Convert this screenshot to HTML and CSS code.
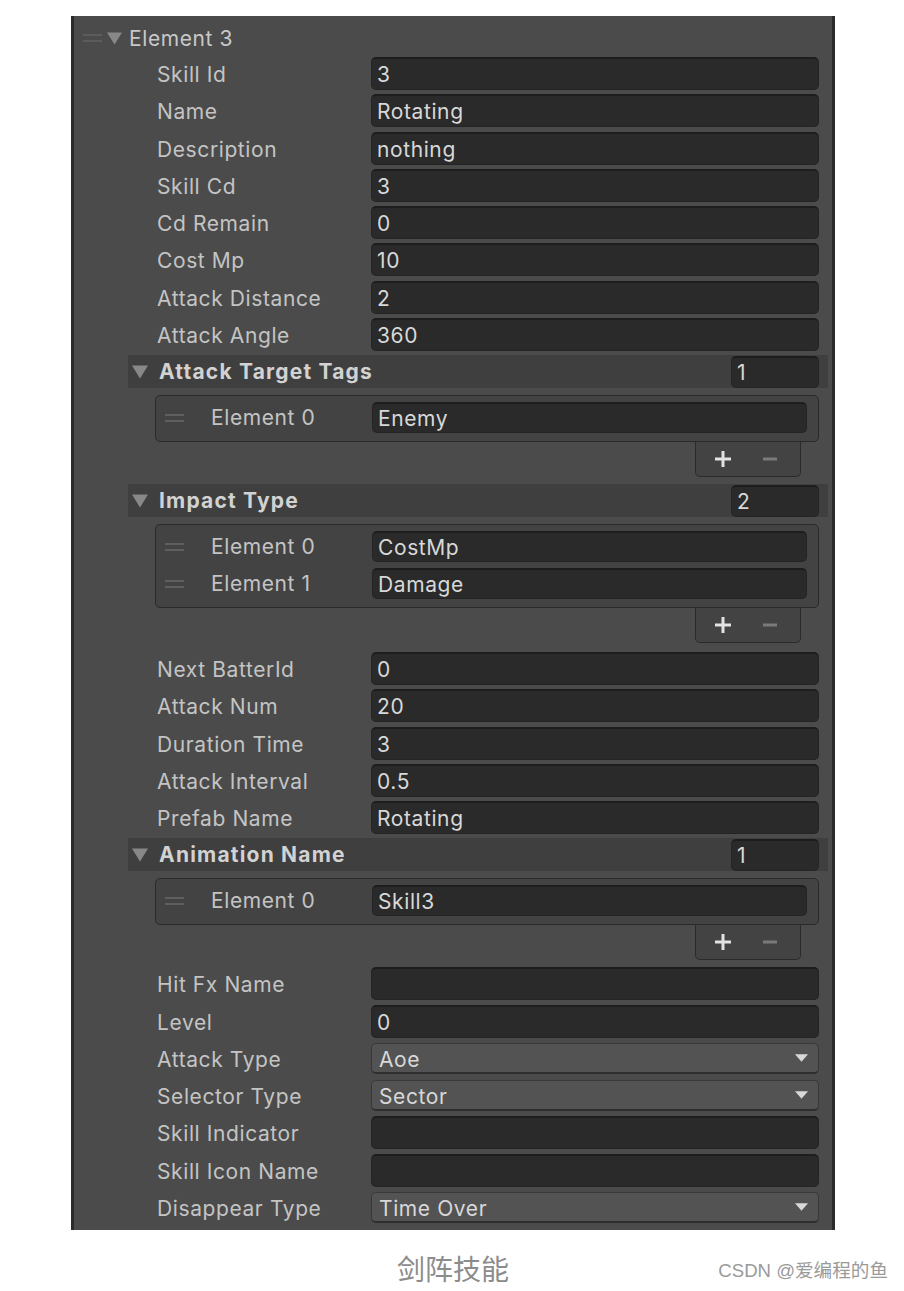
FILE: index.html
```html
<!DOCTYPE html>
<html>
<head>
<meta charset="utf-8">
<link rel="stylesheet" href="styles.css">
</head>
<body>
<div class="panel">
  <div class="elem-head">
    <span class="handle handle-top"></span>
    <svg class="tri tri-top" viewBox="0 0 16 14"><path d="M0 1 H16 L8 14 Z"/></svg>
    <span class="elem-title">Element 3</span>
  </div>

  <div class="row"><span class="label">Skill Id</span><div class="field">3</div></div>
  <div class="row"><span class="label">Name</span><div class="field">Rotating</div></div>
  <div class="row"><span class="label">Description</span><div class="field">nothing</div></div>
  <div class="row"><span class="label">Skill Cd</span><div class="field">3</div></div>
  <div class="row"><span class="label">Cd Remain</span><div class="field">0</div></div>
  <div class="row"><span class="label">Cost Mp</span><div class="field">10</div></div>
  <div class="row"><span class="label">Attack Distance</span><div class="field">2</div></div>
  <div class="row"><span class="label">Attack Angle</span><div class="field">360</div></div>

  <div class="list-head">
    <svg class="tri tri-list" viewBox="0 0 16 14"><path d="M0 1 H16 L8 14 Z"/></svg>
    <span class="list-title">Attack Target Tags</span>
    <div class="count">1</div>
  </div>
  <div class="list">
    <div class="item"><span class="handle"></span><span class="item-label">Element 0</span><div class="field">Enemy</div></div>
  </div>
  <div class="footer">
    <svg class="pm" viewBox="0 0 20 20"><path d="M10 2 V18 M2 10 H18" class="plus"/></svg>
    <svg class="pm" viewBox="0 0 20 20"><path d="M3 10 H17" class="minus"/></svg>
  </div>

  <div class="list-head gap-top">
    <svg class="tri tri-list" viewBox="0 0 16 14"><path d="M0 1 H16 L8 14 Z"/></svg>
    <span class="list-title">Impact Type</span>
    <div class="count">2</div>
  </div>
  <div class="list">
    <div class="item"><span class="handle"></span><span class="item-label">Element 0</span><div class="field">CostMp</div></div>
    <div class="item"><span class="handle"></span><span class="item-label">Element 1</span><div class="field">Damage</div></div>
  </div>
  <div class="footer">
    <svg class="pm" viewBox="0 0 20 20"><path d="M10 2 V18 M2 10 H18" class="plus"/></svg>
    <svg class="pm" viewBox="0 0 20 20"><path d="M3 10 H17" class="minus"/></svg>
  </div>

  <div class="row after-footer"><span class="label">Next BatterId</span><div class="field">0</div></div>
  <div class="row"><span class="label">Attack Num</span><div class="field">20</div></div>
  <div class="row"><span class="label">Duration Time</span><div class="field">3</div></div>
  <div class="row"><span class="label">Attack Interval</span><div class="field">0.5</div></div>
  <div class="row"><span class="label">Prefab Name</span><div class="field">Rotating</div></div>

  <div class="list-head">
    <svg class="tri tri-list" viewBox="0 0 16 14"><path d="M0 1 H16 L8 14 Z"/></svg>
    <span class="list-title">Animation Name</span>
    <div class="count">1</div>
  </div>
  <div class="list">
    <div class="item"><span class="handle"></span><span class="item-label">Element 0</span><div class="field">Skill3</div></div>
  </div>
  <div class="footer">
    <svg class="pm" viewBox="0 0 20 20"><path d="M10 2 V18 M2 10 H18" class="plus"/></svg>
    <svg class="pm" viewBox="0 0 20 20"><path d="M3 10 H17" class="minus"/></svg>
  </div>

  <div class="row after-footer2"><span class="label">Hit Fx Name</span><div class="field"></div></div>
  <div class="row"><span class="label">Level</span><div class="field">0</div></div>
  <div class="row"><span class="label">Attack Type</span><div class="dropdown"><span class="dd-text">Aoe</span><svg class="dd-arrow" viewBox="0 0 14 8"><path d="M0 0 H14 L7 8 Z"/></svg></div></div>
  <div class="row"><span class="label">Selector Type</span><div class="dropdown"><span class="dd-text">Sector</span><svg class="dd-arrow" viewBox="0 0 14 8"><path d="M0 0 H14 L7 8 Z"/></svg></div></div>
  <div class="row"><span class="label">Skill Indicator</span><div class="field"></div></div>
  <div class="row"><span class="label">Skill Icon Name</span><div class="field"></div></div>
  <div class="row"><span class="label">Disappear Type</span><div class="dropdown"><span class="dd-text">Time Over</span><svg class="dd-arrow" viewBox="0 0 14 8"><path d="M0 0 H14 L7 8 Z"/></svg></div></div>
</div>

<div class="caption-area">
  <div class="caption">剑阵技能</div>
  <div class="watermark">CSDN @爱编程的鱼</div>
</div>
</body>
</html>
```

FILE: styles.css
```css
html, body {
  margin: 0;
  padding: 0;
  background: #ffffff;
}

body {
  width: 904px;
  font-family: Inter, "Noto Sans", "Noto Sans CJK SC", sans-serif;
}

.panel {
  box-sizing: border-box;
  margin: 16px 0 0 71px;
  width: 764px;
  height: 1214px;
  overflow: hidden;
  background: #4b4b4b;
  border-left: 3px solid #2b2b2b;
  border-right: 3px solid #2b2b2b;
  display: flex;
  flex-direction: column;
  font-size: 21px;
  letter-spacing: 0.6px;
}

/* Element header */
.elem-head {
  box-sizing: border-box;
  height: 41px;
  padding-top: 3px;
  padding-left: 9px;
  display: flex;
  align-items: center;
}

.handle {
  display: inline-block;
  width: 17px;
  height: 8px;
  border-top: 2px solid #5e5e5e;
  border-bottom: 2px solid #5e5e5e;
  box-sizing: border-box;
  flex: none;
}

.handle-top {
  width: 19px;
  border-color: #5c5c5c;
}

.tri {
  fill: #888888;
  flex: none;
}

.tri-top {
  width: 15px;
  height: 14px;
  margin-left: 5px;
}

.elem-title {
  margin-left: 7px;
  color: #c8c8c8;
}

/* Property rows */
.row {
  flex: none;
  height: 37.25px;
  display: flex;
  align-items: flex-start;
  padding-left: 83px;
  padding-right: 13px;
}

.label {
  width: 214px;
  flex: none;
  line-height: 36px;
  color: #c4c4c4;
  white-space: nowrap;
}

.field {
  box-sizing: border-box;
  flex: 1;
  height: 33px;
  background: #2a2a2a;
  border: 1px solid #242424;
  border-top: 2px solid #1d1d1d;
  border-radius: 5px;
  color: #d8d8d8;
  line-height: 31px;
  padding-left: 5px;
  white-space: nowrap;
}

.dropdown {
  box-sizing: border-box;
  flex: 1;
  height: 31px;
  margin-top: 1px;
  background: #535353;
  border: 1px solid #383838;
  border-bottom: 2px solid #2e2e2e;
  border-radius: 5px;
  color: #d8d8d8;
  padding-left: 7px;
  padding-right: 10px;
  display: flex;
  justify-content: space-between;
  align-items: center;
}

.dd-text {
  line-height: 27px;
  padding-top: 3px;
}

.dd-arrow {
  width: 13px;
  height: 8px;
  fill: #d8d8d8;
}

/* List header */
.list-head {
  flex: none;
  box-sizing: border-box;
  height: 33px;
  margin-left: 54px;
  margin-right: 4px;
  background: #3f3f3f;
  display: flex;
  align-items: center;
  padding-left: 4px;
  padding-right: 9px;
}

.gap-top {
  margin-top: 7px;
}

.tri-list {
  width: 16px;
  height: 15px;
}

.list-title {
  margin-left: 11px;
  flex: 1;
  color: #d2d2d2;
  font-weight: 700;
  letter-spacing: 1.2px;
  line-height: 35px;
}

.count {
  box-sizing: border-box;
  width: 88px;
  height: 32px;
  background: #2a2a2a;
  border: 1px solid #242424;
  border-top: 2px solid #1d1d1d;
  border-radius: 5px;
  color: #d8d8d8;
  line-height: 30px;
  padding-left: 5px;
}

/* List body */
.list {
  flex: none;
  box-sizing: border-box;
  margin-top: 7px;
  margin-left: 81px;
  margin-right: 13px;
  background: #434343;
  border: 1px solid #2a2a2a;
  border-radius: 5px;
  padding: 6px 11px 8px 9px;
  display: flex;
  flex-direction: column;
  gap: 6px;
}

.item {
  height: 31px;
  display: flex;
  align-items: center;
}

.item .handle {
  width: 19px;
  height: 8px;
  border-color: #5f5f5f;
}

.item-label {
  margin-left: 27px;
  width: 161px;
  flex: none;
  color: #c4c4c4;
  line-height: 33px;
}

.item .field {
  height: 31px;
  line-height: 29px;
}

/* Footer with + / - */
.footer {
  flex: none;
  box-sizing: border-box;
  margin-left: 621px;
  width: 106px;
  height: 35px;
  background: #434343;
  border: 1px solid #2a2a2a;
  border-top: none;
  border-radius: 0 0 5px 5px;
  display: flex;
  align-items: center;
  justify-content: center;
  gap: 27px;
  padding-right: 4px;
}

.pm {
  width: 20px;
  height: 20px;
}

.plus {
  stroke: #e2e2e2;
  stroke-width: 3;
  fill: none;
}

.minus {
  stroke: #7a7a7a;
  stroke-width: 3;
  fill: none;
}

.after-footer {
  margin-top: 9px;
}

.after-footer2 {
  margin-top: 7px;
}

/* Caption below */
.caption-area {
  position: relative;
  height: 61px;
}

.caption {
  margin-left: 71px;
  width: 764px;
  text-align: center;
  padding-top: 18px;
  font-size: 28px;
  line-height: 40px;
  color: #8c8c8c;
  font-family: "Noto Sans CJK SC", sans-serif;
}

.watermark {
  position: absolute;
  right: 16px;
  top: 27px;
  font-size: 18.6px;
  line-height: 28px;
  color: #9a9a9a;
  font-family: "Liberation Sans", "Noto Sans CJK SC", sans-serif;
}
```
